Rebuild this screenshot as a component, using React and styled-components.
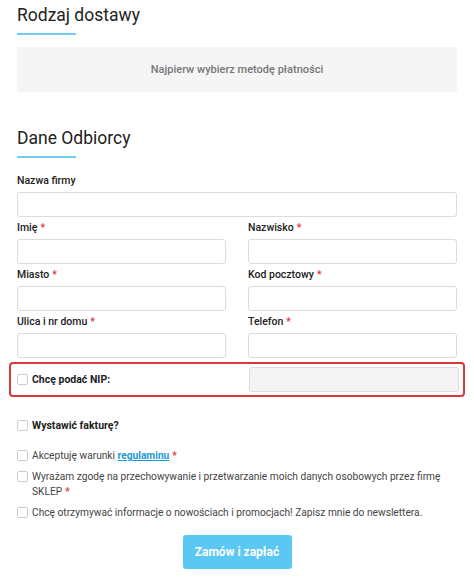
import React from "react";
import styled, { createGlobalStyle } from "styled-components";

const Global = createGlobalStyle`
  html, body { margin: 0; padding: 0; background: #fff; }
  body { font-family: Roboto, "Liberation Sans", sans-serif; color: #333; }
  * { box-sizing: border-box; }
`;

const Page = styled.div`
  width: 474px;
  padding: 5px 17px 16px;
`;

const Section = styled.section`
  margin-top: ${(p) => p.$mt || 0}px;
`;

const Title = styled.h2`
  margin: 0;
  font-size: 17.5px;
  line-height: 21px;
  font-weight: 400;
  color: #222;
`;

const Underline = styled.div`
  width: 59px;
  height: 2px;
  margin-top: 7px;
  background: #72cbf0;
`;

const InfoBox = styled.div`
  margin-top: 12px;
  height: 45px;
  background: #f5f5f5;
  display: flex;
  align-items: center;
  justify-content: center;
  font-size: 11px;
  font-weight: 500;
  color: #777;
`;

const Form = styled.div`
  margin-top: 15px;
  display: flex;
  flex-direction: column;
  gap: 4px;
`;

const Grid = styled.div`
  display: grid;
  grid-template-columns: 1fr 1fr;
  column-gap: 22px;
  row-gap: 3px;
`;

const Field = styled.div`
  display: flex;
  flex-direction: column;
  grid-column: ${(p) => (p.$full ? "1 / -1" : "auto")};
`;

const Label = styled.label`
  font-size: 10.5px;
  line-height: 15px;
  font-weight: 500;
  color: #222;
  margin-bottom: 4px;
`;

const Star = styled.span`
  color: #e0343c;
  margin-left: 3px;
  font-weight: 500;
`;

const Input = styled.input`
  display: block;
  height: 25px;
  width: 100%;
  border: 1px solid #dcdcdc;
  border-radius: 3px;
  background: ${(p) => (p.disabled ? "#f4f4f4" : "#fff")};
  font: inherit;
  outline: none;
`;

const Highlight = styled.div`
  margin: 0 -8px;
  padding: 3px 4px 3px 6px;
  border: 2px solid #d9383c;
  border-radius: 4px;
  display: grid;
  grid-template-columns: 1fr 1fr;
  column-gap: 22px;
  align-items: center;
`;

const Box = styled.span`
  flex: none;
  width: 11px;
  height: 11px;
  margin-top: ${(p) => (p.$top ? 2 : 0)}px;
  border: 1px solid #cdcdcd;
  border-radius: 2px;
  background: #fff;
`;

const CheckRow = styled.div`
  display: flex;
  align-items: ${(p) => (p.$center ? "center" : "flex-start")};
  gap: 4px;
  font-size: ${(p) => (p.$bold ? 10.5 : 10.2)}px;
  line-height: 15px;
  font-weight: ${(p) => (p.$bold ? 700 : 400)};
  color: ${(p) => (p.$bold ? "#222" : "#444")};
`;

const Text = styled.span`
  flex: 1;
`;

const Checks = styled.div`
  margin-top: ${(p) => p.$mt || 0}px;
  display: flex;
  flex-direction: column;
  gap: ${(p) => p.$gap}px;
`;

const Link = styled.a`
  color: #1e9ad6;
  font-weight: 700;
  text-decoration: underline;
`;

const ButtonRow = styled.div`
  margin-top: 15px;
  display: flex;
  justify-content: center;
`;

const Button = styled.button`
  width: 109px;
  height: 34px;
  border: none;
  border-radius: 3px;
  background: #5bc7f3;
  color: #fff;
  font-family: inherit;
  font-size: 12px;
  font-weight: 700;
`;

export default function App() {
  return (
    <>
      <Global />
      <Page>
        <Section>
          <Title>Rodzaj dostawy</Title>
          <Underline />
          <InfoBox>Najpierw wybierz metodę płatności</InfoBox>
        </Section>
        <Section $mt={36}>
          <Title>Dane Odbiorcy</Title>
          <Underline />
          <Form>
            <Grid>
              <Field $full>
                <Label>Nazwa firmy</Label>
                <Input />
              </Field>
              <Field>
                <Label>Imię<Star>*</Star></Label>
                <Input />
              </Field>
              <Field>
                <Label>Nazwisko<Star>*</Star></Label>
                <Input />
              </Field>
              <Field>
                <Label>Miasto<Star>*</Star></Label>
                <Input />
              </Field>
              <Field>
                <Label>Kod pocztowy<Star>*</Star></Label>
                <Input />
              </Field>
              <Field>
                <Label>Ulica i nr domu<Star>*</Star></Label>
                <Input />
              </Field>
              <Field>
                <Label>Telefon<Star>*</Star></Label>
                <Input />
              </Field>
            </Grid>
            <Highlight>
              <CheckRow $bold $center>
                <Box />
                Chcę podać NIP:
              </CheckRow>
              <Input disabled />
            </Highlight>
          </Form>
          <Checks $mt={21} $gap={15}>
            <CheckRow $bold $center>
              <Box />
              Wystawić fakturę?
            </CheckRow>
            <Checks $gap={6}>
              <CheckRow>
                <Box $top />
                <Text>
                  Akceptuję warunki <Link>regulaminu</Link>
                  <Star>*</Star>
                </Text>
              </CheckRow>
              <CheckRow>
                <Box $top />
                <Text>
                  Wyrażam zgodę na przechowywanie i przetwarzanie moich danych osobowych przez firmę SKLEP<Star>*</Star>
                </Text>
              </CheckRow>
              <CheckRow>
                <Box $top />
                <Text>Chcę otrzymywać informacje o nowościach i promocjach! Zapisz mnie do newslettera.</Text>
              </CheckRow>
            </Checks>
          </Checks>
          <ButtonRow>
            <Button>Zamów i zapłać</Button>
          </ButtonRow>
        </Section>
      </Page>
    </>
  );
}
